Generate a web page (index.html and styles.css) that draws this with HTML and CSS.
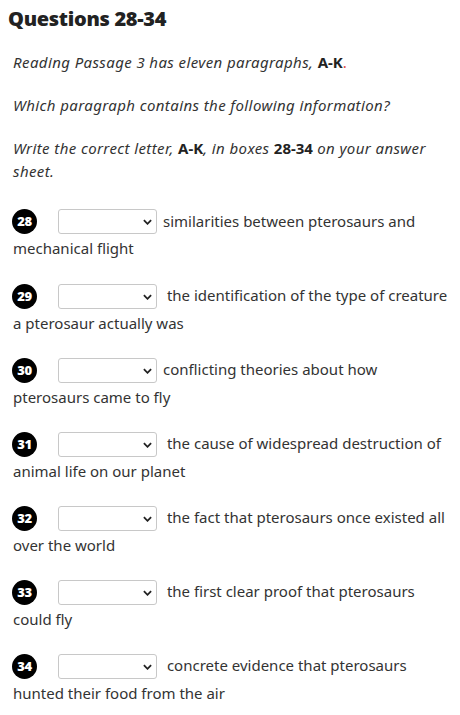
FILE: index.html
```html
<!DOCTYPE html>
<html>
<head>
<meta charset="utf-8">
<link rel="stylesheet" href="styles.css">
</head>
<body>
<div class="page">
  <h2 class="title">Questions 28-34</h2>
  <p class="intro"><em>Reading Passage 3 has eleven paragraphs, <strong>A-K</strong><span class="dot">.</span></em></p>
  <p class="intro"><em>Which paragraph contains the following information?</em></p>
  <p class="intro"><em>Write the correct letter, <strong>A-K</strong>, in boxes <strong>28-34</strong> on your answer sheet.</em></p>

  <div class="q"><span class="num">28</span><span class="sel"><select><option></option></select><svg viewBox="0 0 10 6"><path d="M1 1l4 4 4-4"/></svg></span>similarities between pterosaurs and mechanical flight</div>
  <div class="q"><span class="num">29</span><span class="sel"><select><option></option></select><svg viewBox="0 0 10 6"><path d="M1 1l4 4 4-4"/></svg></span> the identification of the type of creature a pterosaur actually was</div>
  <div class="q"><span class="num">30</span><span class="sel"><select><option></option></select><svg viewBox="0 0 10 6"><path d="M1 1l4 4 4-4"/></svg></span>conflicting theories about how pterosaurs came to fly</div>
  <div class="q"><span class="num">31</span><span class="sel"><select><option></option></select><svg viewBox="0 0 10 6"><path d="M1 1l4 4 4-4"/></svg></span> the cause of widespread destruction of animal life on our planet</div>
  <div class="q"><span class="num">32</span><span class="sel"><select><option></option></select><svg viewBox="0 0 10 6"><path d="M1 1l4 4 4-4"/></svg></span> the fact that pterosaurs once existed all over the world</div>
  <div class="q"><span class="num">33</span><span class="sel"><select><option></option></select><svg viewBox="0 0 10 6"><path d="M1 1l4 4 4-4"/></svg></span> the first clear proof that pterosaurs could fly</div>
  <div class="q"><span class="num">34</span><span class="sel"><select><option></option></select><svg viewBox="0 0 10 6"><path d="M1 1l4 4 4-4"/></svg></span> concrete evidence that pterosaurs hunted their food from the air</div>
</div>
</body>
</html>
```
FILE: styles.css
```css
* { box-sizing: border-box; }
body {
  margin: 0;
  background: #fff;
  font-family: "Noto Sans", "Open Sans", sans-serif;
  color: #333;
}
.page {
  padding: 7px 10px 0 13px;
}
.title {
  margin: 0 0 0 -5px;
  font-family: "Open Sans", sans-serif;
  font-weight: 800;
  font-size: 20px;
  line-height: 24px;
  letter-spacing: -0.3px;
  color: #222;
}
.intro {
  margin: 20px 0 0;
  font-size: 15px;
  line-height: 23px;
}
.intro em {
  font-style: italic;
  letter-spacing: 0.4px;
}
.intro strong {
  font-weight: 700;
  font-style: normal;
  letter-spacing: 0;
  color: #222;
}
.dot { color: #e2483d; font-style: normal; }
.q {
  font-size: 15px;
  line-height: 27px;
  margin-top: 19.6px;
  color: #333;
}
.intro + .q { margin-top: 25px; }
.num {
  display: inline-block;
  vertical-align: middle;
  width: 25px;
  height: 25px;
  margin-left: -1px;
  border-radius: 50%;
  background: #000;
  color: #fff;
  font-family: "Open Sans", sans-serif;
  font-weight: 800;
  font-size: 13px;
  line-height: 25px;
  text-align: center;
  letter-spacing: -0.4px;
  position: relative;
  top: -1px;
}
.sel {
  display: inline-block;
  position: relative;
  vertical-align: middle;
  margin: 0 6px 0 21px;
  top: -1px;
  line-height: 0;
}
.sel select {
  -webkit-appearance: none;
  appearance: none;
  width: 99px;
  height: 25px;
  margin: 0;
  border: 1px solid #c8c8c8;
  border-radius: 3px;
  background: #fff;
  font: inherit;
}
.sel svg {
  position: absolute;
  right: 5px;
  top: 10px;
  width: 9px;
  height: 6px;
  fill: none;
  stroke: #222;
  stroke-width: 2;
}
```
